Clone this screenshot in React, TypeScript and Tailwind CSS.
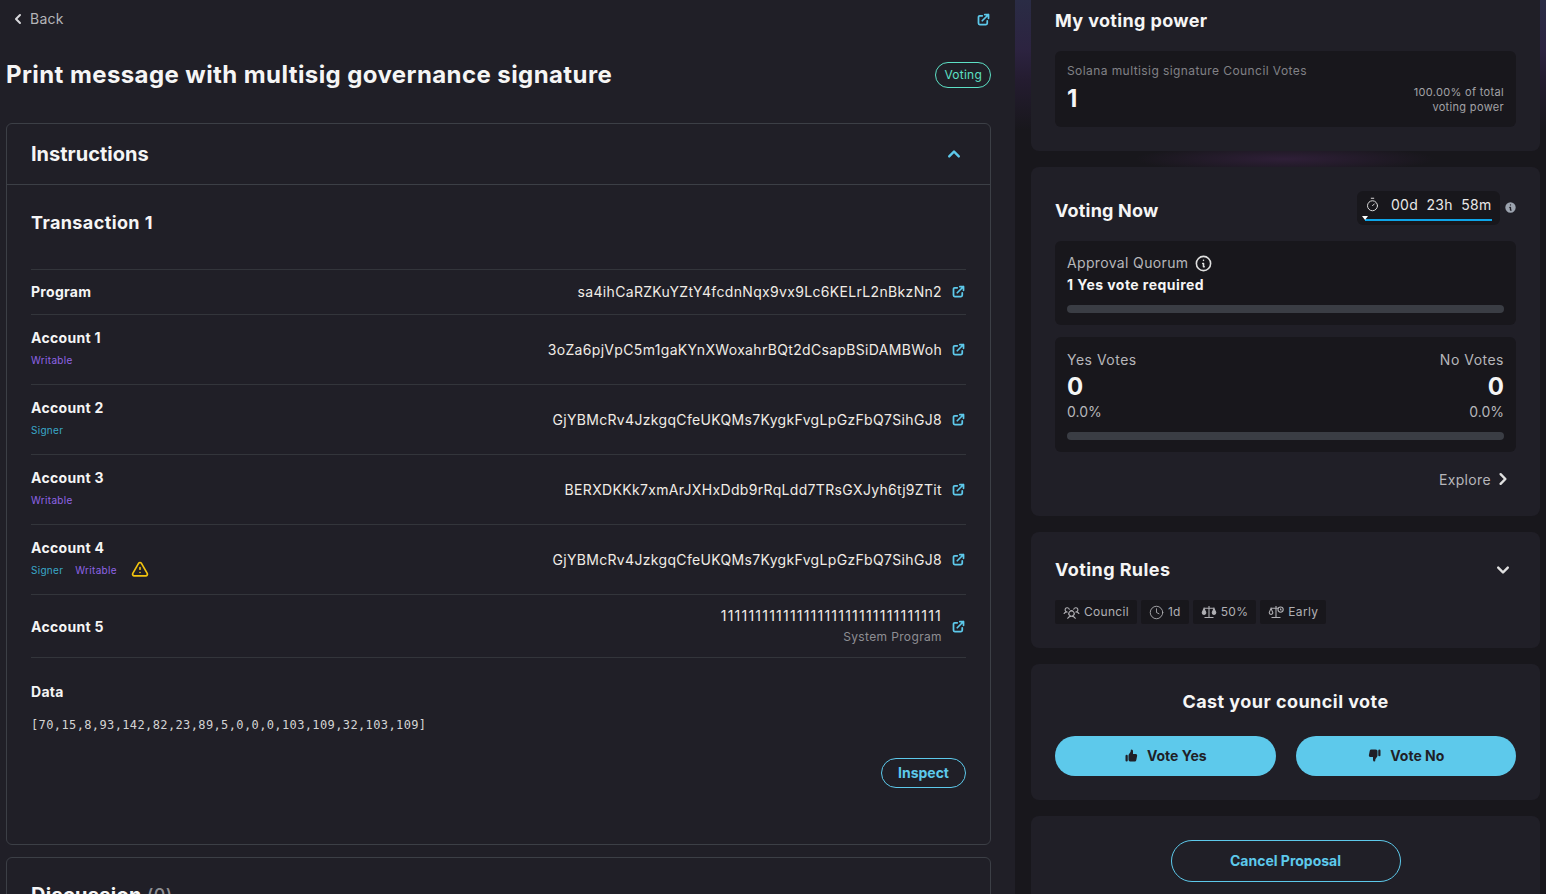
import {
  HiChevronDown,
  HiChevronLeft,
  HiChevronRight,
  HiChevronUp,
  HiInformationCircle,
  HiOutlineExclamation,
  HiOutlineExternalLink,
  HiOutlineInformationCircle,
  HiThumbDown,
  HiThumbUp,
} from 'react-icons/hi';
import { PiUsersThree } from 'react-icons/pi';
import { Clock, Timer } from 'lucide-react';

type Tag = 'Signer' | 'Writable';

const accounts: { label: string; address: string; tags: Tag[]; warn?: boolean }[] = [
  { label: 'Account 1', address: '3oZa6pjVpC5m1gaKYnXWoxahrBQt2dCsapBSiDAMBWoh', tags: ['Writable'] },
  { label: 'Account 2', address: 'GjYBMcRv4JzkgqCfeUKQMs7KygkFvgLpGzFbQ7SihGJ8', tags: ['Signer'] },
  { label: 'Account 3', address: 'BERXDKKk7xmArJXHxDdb9rRqLdd7TRsGXJyh6tj9ZTit', tags: ['Writable'] },
  { label: 'Account 4', address: 'GjYBMcRv4JzkgqCfeUKQMs7KygkFvgLpGzFbQ7SihGJ8', tags: ['Signer', 'Writable'], warn: true },
];

function ExtLink() {
  return <HiOutlineExternalLink className="w-[15px] h-[15px] text-[#5dc9eb] ml-[9px] shrink-0 [&_path]:[stroke-width:2.8]" />;
}

// balance scale used on the 50% and Early chips
function ScaleIcon({ early }: { early?: boolean }) {
  return (
    <svg viewBox="0 0 16 16" className="w-[16px] h-[16px]" fill="none" stroke="currentColor" strokeWidth={1.1}>
      <path d="M8 2v11M3.5 13.5h9M3 4.2h10" />
      <path d="M1.2 8.6 3 4.4l1.8 4.2a1.8 1.8 0 0 1-3.6 0z" fill={early ? 'none' : 'currentColor'} />
      {early ? (
        <>
          <circle cx="12.6" cy="5.6" r="2.6" fill="#18171c" />
          <path d="M12.6 4.4v1.3l.9.5" />
        </>
      ) : (
        <path d="M11.2 8.6 13 4.4l1.8 4.2a1.8 1.8 0 0 1-3.6 0z" fill="currentColor" />
      )}
    </svg>
  );
}

function RuleChip({ icon, label }: { icon: React.ReactNode; label: string }) {
  return (
    <div className="flex items-center gap-[4px] h-[24px] px-[8px] bg-[#18171c] rounded-[2px] text-[12px] tracking-[0.025em] text-[#b0b0b4]">
      {icon}
      <span>{label}</span>
    </div>
  );
}

export default function App() {
  return (
    <div
      className="flex h-[894px] w-[1546px] overflow-hidden bg-[#18171c] text-[#f5f5f5]"
      style={{ fontFamily: 'Inter, sans-serif' }}
    >
      {/* Left column */}
      <div className="w-[1015px] shrink-0 bg-[#201f27] pl-[6px] pr-[24px]">
        <div className="flex items-center justify-between h-[38px] pl-[2px]">
          <div className="flex items-center pb-[1px] text-[14px] tracking-[0.02em] text-[#b4b4b8]">
            <HiChevronLeft className="w-[20px] h-[20px] mr-[2px] text-[#d8d8dc]" />
            Back
          </div>
          <HiOutlineExternalLink className="w-[15px] h-[15px] text-[#5dc9eb] [&_path]:[stroke-width:2.8]" />
        </div>

        <div className="flex items-center justify-between h-[74px] mb-[11px]">
          <h1 className="text-[24px] font-bold leading-[32px] tracking-[0.41px]">
            Print message with multisig governance signature
          </h1>
          <span className="flex items-center h-[26px] px-[8px] rounded-full border border-[#5de0c5] text-[12px] tracking-[0.02em] text-[#5de0c5]">
            Voting
          </span>
        </div>

        {/* Instructions */}
        <div className="h-[722px] rounded-[6px] border border-[#3c3f46]">
          <div className="flex items-center justify-between h-[61px] px-[24px] border-b border-[#3c3f46]">
            <h2 className="text-[20px] font-bold">Instructions</h2>
            <HiChevronUp className="w-[24px] h-[24px] text-[#5dc9eb]" />
          </div>

          <div className="px-[24px]">
            <h3 className="text-[18px] font-bold leading-[28px] tracking-[0.4px] pt-[24px] pb-[32px]">Transaction 1</h3>

            <div className="flex items-center justify-between h-[45px] border-t border-[#33353b]">
              <span className="text-[14px] font-bold tracking-[0.3px] mb-[2px]">Program</span>
              <div className="flex items-center mb-[2px] text-[14px] tracking-[0.33px] text-[#f0ece6]">
                sa4ihCaRZKuYZtY4fcdnNqx9vx9Lc6KELrL2nBkzNn2
                <ExtLink />
              </div>
            </div>

            {accounts.map((a) => (
              <div key={a.label} className="flex items-center justify-between h-[70px] border-t border-[#33353b]">
                <div>
                  <div className="text-[14px] font-bold leading-[20px] tracking-[0.3px] -mt-[1px]">{a.label}</div>
                  <div className="flex items-center h-[20px] mt-[3px] text-[10px] tracking-[0.03em]">
                    {a.tags.map((t) => (
                      <span key={t} className={t === 'Signer' ? 'mr-[12px] text-[#3aa8c9]' : 'mr-[12px] text-[#8f64e6]'}>
                        {t}
                      </span>
                    ))}
                    {a.warn && <HiOutlineExclamation className="w-[20px] h-[20px] text-[#f2c40f] ml-[1px] mb-[2px]" />}
                  </div>
                </div>
                <div className="flex items-center text-[14px] tracking-[0.33px] text-[#f0ece6]">
                  {a.address}
                  <ExtLink />
                </div>
              </div>
            ))}

            <div className="flex items-center justify-between h-[63px] border-t border-[#33353b]">
              <span className="text-[14px] font-bold tracking-[0.3px]">Account 5</span>
              <div className="flex items-center">
                <div className="text-right">
                  <div className="text-[14px] leading-[20px] tracking-[1.22px] text-[#f0ece6]">11111111111111111111111111111111</div>
                  <div className="text-[12px] leading-[20px] mt-[1px] tracking-[0.03em] text-[#8e8e93]">System Program</div>
                </div>
                <ExtLink />
              </div>
            </div>

            <div className="border-t border-[#33353b] pt-[24px]">
              <div className="text-[14px] font-bold leading-[20px] tracking-[0.3px]">Data</div>
              <div
                className="mt-[15px] text-[12px] leading-[16px] tracking-[0.38px] text-[#d4d4d4]"
                style={{ fontFamily: '"DejaVu Sans Mono", monospace' }}
              >
                [70,15,8,93,142,82,23,89,5,0,0,0,103,109,32,103,109]
              </div>
              <div className="flex justify-end mt-[25px]">
                <button className="flex items-center justify-center h-[30px] w-[85px] pb-[2px] rounded-full border border-[#5dc9eb] text-[14px] font-bold text-[#5dc9eb]">
                  Inspect
                </button>
              </div>
            </div>
          </div>
        </div>

        {/* Discussion */}
        <div className="mt-[12px] h-[100px] rounded-[6px] border border-[#3c3f46] px-[24px] pt-[23px]">
          <h2 className="text-[20px] font-bold leading-[28px] tracking-[0.3px]">
            Discussion <span className="text-[18px] font-medium text-[#8e8e93]">(0)</span>
          </h2>
        </div>
      </div>

      {/* Right column */}
      <div
        className="flex-1 flex flex-col gap-[16px] pl-[16px] pr-[6px]"
        style={{
          background:
            'radial-gradient(ellipse 150px 14px at 270px 159px, #2f1f38 0%, transparent 100%), linear-gradient(180deg, #2a2c45 0px, #2c2340 50px, #241c30 80px, #18171c 130px)',
        }}
      >
        <div className="h-[151px] shrink-0 bg-[#201f27] rounded-b-[8px] px-[24px] pt-[9px]">
          <h2 className="text-[18px] font-bold leading-[24px] tracking-[0.36px]">My voting power</h2>
          <div className="flex items-end justify-between h-[76px] mt-[18px] bg-[#18171c] rounded-[6px] px-[12px] pt-[12px] pb-[12px]">
            <div>
              <div className="text-[12px] leading-[16px] tracking-[0.035em] text-[#818186]">
                Solana multisig signature Council Votes
              </div>
              <div className="text-[24px] font-bold leading-[32px] mt-[4px]">1</div>
            </div>
            <div className="text-right text-[11px] leading-[15px] tracking-[0.03em] text-[#a2a2a6]">
              100.00% of total
              <br />
              voting power
            </div>
          </div>
        </div>

        <div className="h-[349px] shrink-0 bg-[#201f27] rounded-[8px] px-[24px] pt-[24px]">
          <div className="flex items-center justify-between h-[34px]">
            <h2 className="text-[18px] font-bold mt-[4px] tracking-[0.2px]">Voting Now</h2>
            <div className="flex items-center -mr-[1px]">
              <div className="relative flex items-center h-[34px] w-[143px] bg-[#18171c] rounded-[6px] pl-[8px] pb-[8px] text-[14px] tracking-[0.02em] text-[#e8e8e8]">
                <Timer className="w-[15px] h-[15px] text-[#d8d8d8] mr-[11px]" strokeWidth={1.6} />
                <span className="whitespace-pre">00d  23h  58m</span>
                <div className="absolute left-[8px] bottom-[4px] w-[127px] h-[2px] bg-[#0ea5e9]" />
                <div className="absolute left-[5px] bottom-[5px] w-0 h-0 border-l-[3px] border-r-[3px] border-t-[4px] border-l-transparent border-r-transparent border-t-white" />
              </div>
              <HiInformationCircle className="w-[13px] h-[13px] ml-[4px] -mt-[2px] text-[#9ca3af]" />
            </div>
          </div>

          <div className="mt-[16px] h-[84px] bg-[#18171c] rounded-[6px] px-[12px] pt-[12px]">
            <div className="flex items-center text-[14px] leading-[20px] tracking-[0.025em] text-[#b6b6ba]">
              Approval Quorum
              <HiOutlineInformationCircle className="w-[19px] h-[19px] ml-[6px] text-[#e0e0e0]" />
            </div>
            <div className="text-[14px] font-bold leading-[20px] mt-[2px] tracking-[0.45px]">1 Yes vote required</div>
            <div className="h-[8px] mt-[10px] rounded-full bg-[#3a3d44]" />
          </div>

          <div className="mt-[12px] h-[115px] bg-[#18171c] rounded-[6px] px-[12px] pt-[13px]">
            <div className="flex justify-between">
              <div>
                <div className="text-[14px] leading-[20px] tracking-[0.035em] text-[#b6b6ba]">Yes Votes</div>
                <div className="text-[24px] font-bold leading-[32px] mt-[1px]">0</div>
                <div className="text-[14px] leading-[20px] text-[#b6b6ba] -mt-[1px]">0.0%</div>
              </div>
              <div className="text-right">
                <div className="text-[14px] leading-[20px] tracking-[0.035em] text-[#b6b6ba]">No Votes</div>
                <div className="text-[24px] font-bold leading-[32px] mt-[1px]">0</div>
                <div className="text-[14px] leading-[20px] text-[#b6b6ba] -mt-[1px]">0.0%</div>
              </div>
            </div>
            <div className="h-[8px] mt-[10px] rounded-full bg-[#3a3d44]" />
          </div>

          <div className="flex items-center justify-end h-[20px] mt-[17px] pr-[3px] text-[14px] tracking-[0.025em] text-[#b6b6ba]">
            Explore
            <HiChevronRight className="w-[24px] h-[24px] -mr-[2px] text-[#e0e0e0]" />
          </div>
        </div>

        <div className="h-[116px] shrink-0 bg-[#201f27] rounded-[8px] px-[24px] pt-[24px]">
          <div className="flex items-center justify-between h-[28px]">
            <h2 className="text-[18px] font-bold pb-[2px] tracking-[0.42px]">Voting Rules</h2>
            <HiChevronDown className="w-[24px] h-[24px] mr-[1px] text-[#e0e0e0]" />
          </div>
          <div className="flex gap-[4px] mt-[16px]">
            <RuleChip icon={<PiUsersThree className="w-[17px] h-[17px]" />} label="Council" />
            <RuleChip icon={<Clock className="w-[15px] h-[15px]" strokeWidth={1.4} />} label="1d" />
            <RuleChip icon={<ScaleIcon />} label="50%" />
            <RuleChip icon={<ScaleIcon early />} label="Early" />
          </div>
        </div>

        <div className="h-[136px] shrink-0 bg-[#201f27] rounded-[8px] px-[24px] pt-[24px]">
          <h2 className="text-[18px] font-bold leading-[28px] text-center tracking-[0.025em]">Cast your council vote</h2>
          <div className="flex gap-[20px] mt-[20px]">
            <button className="flex-1 flex items-center justify-center gap-[8px] h-[40px] pb-[1px] rounded-full bg-[#5dc9eb] text-[14px] font-bold text-[#201f27]">
              <HiThumbUp className="w-[15px] h-[15px]" />
              Vote Yes
            </button>
            <button className="flex-1 flex items-center justify-center gap-[8px] h-[40px] pb-[1px] rounded-full bg-[#5dc9eb] text-[14px] font-bold text-[#201f27]">
              <HiThumbDown className="w-[15px] h-[15px]" />
              Vote No
            </button>
          </div>
        </div>

        <div className="h-[100px] shrink-0 bg-[#201f27] rounded-[8px] pt-[24px] flex justify-center">
          <button className="h-[42px] w-[230px] pb-[2px] rounded-full border border-[#5dc9eb] text-[14px] font-bold text-[#5dc9eb]">
            Cancel Proposal
          </button>
        </div>
      </div>
    </div>
  );
}
